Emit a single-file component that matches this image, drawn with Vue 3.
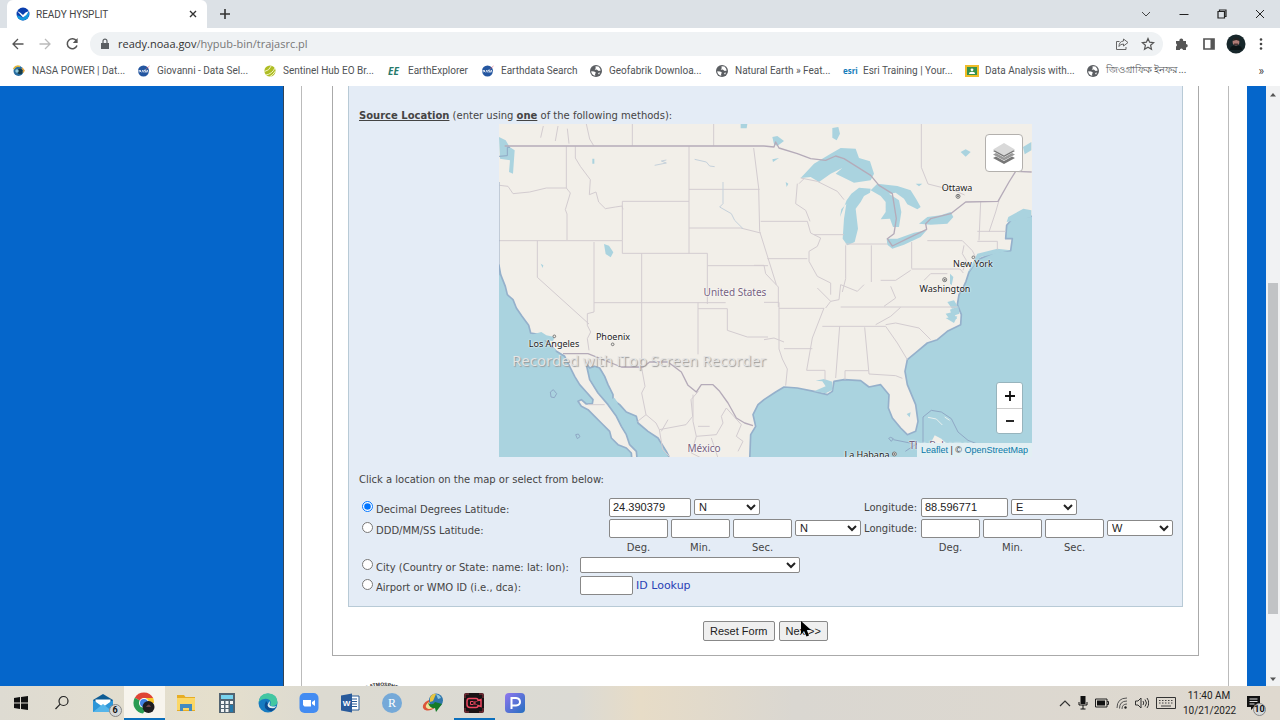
<script setup>
import { ref } from 'vue'

const bookmarks = [
  { text: 'NASA POWER | Dat...', icon: 'power', width: 125 },
  { text: 'Giovanni - Data Sel...', icon: 'nasa', width: 126 },
  { text: 'Sentinel Hub EO Br...', icon: 'sentinel', width: 125 },
  { text: 'EarthExplorer', icon: 'ee', width: 93 },
  { text: 'Earthdata Search', icon: 'nasa', width: 108 },
  { text: 'Geofabrik Downloa...', icon: 'globe', width: 126 },
  { text: 'Natural Earth » Feat...', icon: 'globe', width: 128 },
  { text: 'Esri Training | Your...', icon: 'esri', width: 122 },
  { text: 'Data Analysis with...', icon: 'class', width: 121 },
  { text: 'জিওগ্রাফিক ইনফর...', icon: 'globe', width: 110 },
]

const places = [
  { name: 'Ottawa', x: 458, y: 64 },
  { name: 'New York', x: 474, y: 140 },
  { name: 'Washington', x: 446, y: 165 },
  { name: 'Phoenix', x: 114, y: 213 },
  { name: 'Los Angeles', x: 55, y: 220 },
  { name: 'United States', x: 236, y: 168, country: true },
  { name: 'México', x: 205, y: 324, country: true },
  { name: 'La Habana', x: 368, y: 331 },
  { name: 'The Bahamas', x: 442, y: 321, country: true },
]

const parts = ['Deg.', 'Min.', 'Sec.']
const method = ref('decimal')
const latitude = ref('24.390379')
const longitude = ref('88.596771')
</script>

<template>
  <div class="screen">
    <header>
      <div class="tabs">
        <div class="tab">
          <svg width="14" height="14" viewBox="0 0 14 14"><circle cx="7" cy="7" r="6.5" fill="#0a3fae" /><path d="M.8 8.5Q4 8 7 11q2-3 6-6 1 7-6 8.500Q2 13 .8 8.500" fill="#1597dc" /><path d="M1 4q3 1 6 4 2-3 6-4-2 4-6 6.500Q4 7 1 4" fill="#fff" /></svg>
          <span>READY HYSPLIT</span>
          <button class="bare close" aria-label="Close tab"><svg width="8" height="8" viewBox="0 0 8 8"><path d="M1 1l6 6M7 1L1 7" stroke="#333" stroke-width="1.4" /></svg></button>
        </div>
        <button class="bare new-tab" aria-label="New tab"><svg width="12" height="12" viewBox="0 0 12 12"><path d="M6 1v10M1 6h10" stroke="#333" stroke-width="1.6" /></svg></button>
        <div class="window-buttons">
          <button class="bare" aria-label="Search tabs"><svg width="10" height="10" viewBox="0 0 10 10"><path d="M1 3l4 4 4-4" fill="none" stroke="#444" /></svg></button>
          <button class="bare" aria-label="Minimize"><svg width="10" height="10" viewBox="0 0 10 10"><path d="M.5 5.500h9" stroke="#222" /></svg></button>
          <button class="bare" aria-label="Restore"><svg width="10" height="10" viewBox="0 0 10 10"><path d="M1 2.500h6.500v6.500H1zM2.500 2.500v-1.500h6.500v6.500H7.500" fill="none" stroke="#222" stroke-width="1.200" /></svg></button>
          <button class="bare" aria-label="Close window"><svg width="10" height="10" viewBox="0 0 10 10"><path d="M1 1l8 8M9 1L1 9" stroke="#222" /></svg></button>
        </div>
      </div>

      <div class="toolbar">
        <button class="bare" aria-label="Back"><svg width="12" height="12" viewBox="0 0 12 12"><path d="M11.500 6H1.500M6 1L1 6l5 5" fill="none" stroke="#555" stroke-width="1.300" /></svg></button>
        <button class="bare" aria-label="Forward"><svg width="12" height="12" viewBox="0 0 12 12"><path d="M.5 6h10M6 1l5 5-5 5" fill="none" stroke="#bbb" stroke-width="1.300" /></svg></button>
        <button class="bare" aria-label="Reload"><svg width="14" height="14" viewBox="0 0 14 14"><path d="M11.500 4A5 5 0 1 0 12 8.500" fill="none" stroke="#555" stroke-width="1.500" /><path d="M12.600 1v5H7.800z" fill="#555" /></svg></button>
        <div class="address">
          <svg width="10" height="12" viewBox="0 0 10 12"><path d="M1 5h8v6H1z" fill="#5a5e62" /><path d="M3 5V3.200a2 2 0 0 1 4 0V5" fill="none" stroke="#5a5e62" stroke-width="1.200" /></svg>
          <span class="url">ready.noaa.gov<i>/hypub-bin/trajasrc.pl</i></span>
          <button class="bare" aria-label="Share"><svg width="14" height="14" viewBox="0 0 14 14"><path d="M4.500 4.500h-3v8h9.500V10" fill="none" stroke="#666" /><path d="M8.500 2l4.500 3.500L8.500 9V7Q5 7 4 9.500 4 4.500 8.500 4z" fill="none" stroke="#666" /></svg></button>
          <button class="bare" aria-label="Bookmark"><svg width="14" height="14" viewBox="0 0 14 14"><path d="M7 1.500l1.600 3.700 4 .4-3 2.700.9 4L7 10.200l-3.500 2.100.9-4-3-2.700 4-.4z" fill="none" stroke="#555" stroke-width="1.200" /></svg></button>
        </div>
        <button class="bare ext" aria-label="Extensions"><svg width="14" height="14" viewBox="0 0 14 14"><path d="M1 4h3.500a1.900 1.900 0 1 1 3.600 0H11v3a1.700 1.700 0 1 1 0 3.500V13H8a1.600 1.600 0 0 0-3.200 0H1V9.500a1.700 1.700 0 0 0 0-3z" fill="#555" /></svg></button>
        <button class="bare ext" aria-label="Side panel"><svg width="12" height="12" viewBox="0 0 12 12"><path d="M1 1h10v10H1z" fill="none" stroke="#555" stroke-width="1.700" /><path d="M7.500 1H11v10H7.500z" fill="#555" /></svg></button>
        <button class="bare ext" aria-label="Profile"><svg width="20" height="20" viewBox="0 0 20 20"><circle cx="10" cy="10" r="9.500" fill="#17272b" /><circle cx="10" cy="8" r="3.400" fill="#b07c76" /><path d="M6.500 7q1-4 4-3.500 3-.2 3.200 3.500l-3.500-1z" fill="#222" /><path d="M8 9.500h4v1.500H8z" fill="#4c3433" /><path d="M4 16q0-5 6-4 6-1 6 4" fill="#0c1416" /></svg></button>
        <button class="bare ext menu" aria-label="Menu"><svg width="4" height="12" viewBox="0 0 4 12"><g fill="#444"><circle cx="2" cy="1.500" r="1.300" /><circle cx="2" cy="6" r="1.300" /><circle cx="2" cy="10.500" r="1.300" /></g></svg></button>
      </div>

      <nav class="bookmarks">
        <a v-for="b in bookmarks" :key="b.text" href="#" :style="{ width: b.width + 'px' }">
          <b v-if="b.icon === 'ee'" class="ee">EE</b>
          <b v-else-if="b.icon === 'esri'" class="esri">esri</b>
          <svg v-else-if="b.icon === 'nasa'" width="14" height="14" viewBox="0 0 14 14"><circle cx="6.500" cy="7" r="5.500" fill="#2456a0" /><path d="M2 8.500V6l1.500 2V6M4.800 8.500l1-2.500 1 2.500M7.500 8H9V7H7.500V6h1.700M9.500 8.500l.8-2.500.8 2.500" fill="none" stroke="#fff" stroke-width=".7" /><path d="M9 5L12.500 2" fill="none" stroke="#d05468" stroke-width=".6" /></svg>
          <svg v-else-if="b.icon === 'power'" width="14" height="14" viewBox="0 0 14 14"><circle cx="6.500" cy="7" r="5" fill="#286da0" /><circle cx="8" cy="7.500" r="2.700" fill="#163b48" /><path d="M1.500 5Q4 1 8 2.500" fill="none" stroke="#e4b83c" stroke-width="1.500" /><path d="M10 4l2 2.500-1 2" fill="none" stroke="#e3a33d" stroke-width="1.500" /><circle cx="5" cy="7" r="1.700" fill="#8fc9db" /></svg>
          <svg v-else-if="b.icon === 'sentinel'" width="14" height="14" viewBox="0 0 14 14"><circle cx="7" cy="7" r="5.600" fill="#aebd24" /><path d="M1.500 7.500Q6 7 8.500 1.500M3 11q6-1 9-7M7 12.500Q10 11 12.500 7" fill="none" stroke="#f4f5c4" stroke-width="1" /></svg>
          <svg v-else-if="b.icon === 'globe'" width="14" height="14" viewBox="0 0 14 14"><circle cx="7" cy="7" r="6" fill="#5b5e62" /><path d="M2.200 7.200l3 .3 1.800 1.300-1 1.200.3 1.800Q2.500 11 2.200 7.200M6.500 2.200l3 .3L11 4.500l.7 2-2 .5-2-1.500-2 .2 1-1.500zM9 9l2-.5-1 2.200z" fill="#fff" /></svg>
          <svg v-else width="14" height="14" viewBox="0 0 14 14"><path d="M0 1h14v12H0z" fill="#efbc28" /><path d="M2 3h10v8H2z" fill="#37914c" /><circle cx="7" cy="5.800" r="1.400" fill="#fff" /><path d="M4 10q0-2.300 3-2.300T10 10z" fill="#fff" /></svg>
          <span>{{ b.text }}</span>
        </a>
        <button class="bare more" aria-label="More bookmarks">»</button>
      </nav>
    </header>

    <main>
      <div class="site">
        <div class="frame">
          <form class="box" @submit.prevent>
            <section class="panel">
              <p class="intro"><b>Source Location</b> (enter using <b>one</b> of the following methods):</p>

              <div class="map">
                <svg class="terrain" viewBox="3 6 1599 999" preserveAspectRatio="none">
                  <path d="M0 0h1610v1010H0z" fill="#f2efe9" />
                  <g fill="#aad3df" stroke="#95b0cb" stroke-width="5" stroke-linejoin="round">
                    <path transform="translate(0 498)" d="M-10-90L3-68 8-40 22-5 28 20 45 35 55 60 72 85 92 112 98 135 125 140 150 165 175 190 200 205 215 235 230 265 245 290 265 312 285 335 283 347 265 348 250 335 240 340 250 355 270 365 290 385 310 405 335 430 340 450 360 470 385 480 400 495 402 520H-10z" />
                    <path transform="translate(0 498)" d="M264 225L275 240 290 235 305 240 320 265 330 290 345 320 345 335 365 350 385 372 415 385 420 405 450 430 480 450 505 490 520 520H418L415 490 395 470 385 440 370 415 355 385 330 350 300 315 275 275z" />
                    <path transform="translate(798 498)" d="M-43 520L-40 440-25 415-33 380-18 350 0 335 35 312 60 297 100 300 150 310 190 320 205 310 210 280 240 275 290 278 315 297 350 290 375 320 373 360 385 390 410 420 430 440 455 430 462 400 455 350 430 290 423 250 430 215 460 190 490 165 520 155 550 130 590 110 592 80 580 50 585 20 597 0 606-20 615-48 640-85 700-110 740-112 745-148 725-148 728-188 745-208 775-213 812-216V520z" />
                  </g>
                  <g fill="#aad3df">
                    <path d="M3 45l20 10 12 20 15 10-5 70-12-5 3-35-30-5zM318 366l15 5 13 20-8 15-15-10zM283 110h6v15h-6zM128 425l8 5-2 8zM728 6l20 0-2 13h-18z" />
                    <path transform="translate(798 0)" d="M110 168L150 125 200 95 230 78 275 80 285 108 318 118 330 155 320 175 270 182 235 165 215 155 235 138 200 155 165 180 140 165zM262 215L285 197 320 200 318 212 300 222 290 240 275 260 282 320 272 360 250 370 236 350 240 290 247 245 232 262 228 285 248 235zM320 205L340 185 400 192 440 205 456 230 470 255 460 262 430 247 420 230 395 212 375 215 405 235 412 270 405 315 387 315 378 290 350 292 365 270 365 240 350 222zM368 350L400 350 450 332 488 325 470 345 420 368 385 380 370 368zM465 305L490 285 530 280 560 270 568 285 550 305 500 308zM205 18l18-3 5 20-10 20-13-8zM590 90l15-8 15 8-15 14zM777 75l25-15v25l-20 12zM25 45l15-3 20 15-20 15-10-5zM25 112l20-4-18 12zM65 180l8 5-5 10zM455 185l20 0-10 8zM640 395l60-15 40 5-90 20-40 50zM558 455l10 10-5 25-5-5zM550 540l20-5 12 20-18 5zM545 575l22-5 12 20-20 5zM728 300l5-15 45-25 24 5v20l-40 8z" />
                    <path transform="translate(0 498)" d="M100 140l30-8 15 10 25 5-5 12-40-3zM150 180l20 0 5 12zM325 300l10 5 2 20-8-5zM330 335l20-5 10 15-10 15z" />
                    <path transform="translate(798 498)" d="M150 310l35-15-10-15-20-2 25-5 25 8 0 25-20 10zM428 378l12-5-3 15zM558 65l25-10 3 22-22 8zM545 90l35-5-10 20z" />
                  </g>
                  <g fill="none" stroke="#d3ccd0" stroke-width="3" stroke-linejoin="round">
                    <path d="M5 190l25 3 15 22 50-5 50-12h60M205 73v125l12 15-15 50 5 13v78M0 356h373v38h255v37h182M373 238v118M373 238h200M573 73v321M573 202h212M573 318h155l40 10 20 5M118 356v110l155 140M288 360v210l-20 5v35l10 20-10 20 5 35M431 394v342h-60M288 542h395M628 431v115M600 542v155M600 560h88v65l60 20h62M403 6v65M647 6v65M265 6l10 45 12 20M232 73v35l15 25 30 40-3 45 20-8 8 30 20 20 30-5 20-3 3 10M767 78l15 120 3 130 25 80 25 80M136 12l-8 35M180 12l-8 45M208 20l5 45" />
                    <path transform="translate(798 0)" d="M-10 298h140M10 410h120M-30 430h30l5 25 38 40v60M130 298l10 35 30 15-10 25-25 15 0 30 25 45 40 20 0 35M150 338h90M245 370v100l-10 40M245 366h125M322 370v110M443 360v80M443 441h145l10 12M350 475l45 0 45-30M100 185l-5 60 30 20 13 33M110 168l50 10 60 30 20 25M472 6v130l20 50 80 20 30 13M490 356h105l30 30 10 20M640 358h60M645 355l5-115M705 235l-10 35-20 60M640 328h85M700 358v25M120 170l-15 15M600 370l-5 25 12 20-10 30M480 475l20-20 50 0" />
                    <path transform="translate(798 498)" d="M0 43h45v140l10 30 15 30-5 50M0 155l30-5 30 12M45 61h135M230 57h350M175 115h190M60 182h85M128 247h55v30M215 270l12-155M302 118l13 140 80 5 20 8M365 115l35 50 30 50M335 110l45-25 30-27M365 110l30-5 70 15 35 35M243 275v-27h70M180 60l-35 90-17 97M160 0l40 40-15 20M200 40l25-5 5-45 50 20 20-20M360 55l35-25-15-35" />
                    <path transform="translate(0 498)" d="M431 240l10 55-10 20 13 65-25 20M444 380l30 25 10 20 80-15 20-25-5-50 22-25M484 425l10 60 25 25M510 395l-20 35M585 320v80l10 45 60-5 20-35-5-20 15-25 45 50-15 35 20 15-15 30M595 445l-15 50 30 15M640 450l20 60M600 415h35M270 350h50" />
                  </g>
                  <g fill="none" stroke="#b5abb9" stroke-width="4" stroke-linejoin="round">
                    <path d="M20 72h778" />
                    <path transform="translate(798 0)" d="M0 72l30 3 5-15 10 18 55 17 40 15 45 5 30-13 25 8 80 50 25 30 40 25 12 75-7 45-20 15 15 22 45-22 58-28-3-17 15-15 60-15 45-35 97-2 33-58 20-32 48 2" />
                    <path transform="translate(0 498)" d="M195 197h75l100 40h65l20-15h55l40 30 20 40 25 20 15-22 35 0 20 20 25 35 25 45 25 15 25 8" />
                  </g>
                  <g fill="none" stroke="#8fa8c5" stroke-width="3">
                    <path d="M3 180v280M3 103l25-2v-25l8 0M166 803l10 12-7 12-10-2-2-15zM233 938l8-2 5 8-8 6zM1172 949l6-3 8 4-6 8zM1186 953l60 12M1222 988l30-20M1275 970l0-85 25-20 30 5 30 20 20 40 30 25 30 12" />
                    <path d="M1290 886l25 5 18 18M1340 885l15 10" stroke="#e9f1ef" />
                  </g>
                  <path d="M1310 940l20 10 30 30-70 0z" fill="#f2efe9" />
                  <g fill="#f2efe9" stroke="#777" stroke-width="3"><circle cx="1380" cy="223" r="6" /><circle cx="1340" cy="473" r="6" /><circle cx="1426" cy="406" r="4" /><circle cx="344" cy="667" r="4" /><circle cx="169" cy="643" r="4" /><circle cx="1189" cy="996" r="6" /></g>
                  <g fill="#777"><circle cx="1380" cy="223" r="3" /><circle cx="1340" cy="473" r="3" /><circle cx="1189" cy="996" r="3" /></g>
                  <path d="M470 130l35-7-15-6 15-3M590 112l35 8 10 12 15 2M675 180v65l-10 10 35 20 10 20 25 25" fill="none" stroke="#c5d1db" stroke-width="3" />
                </svg>
                <span v-for="p in places" :key="p.name" class="place" :class="{ country: p.country }" :style="{ left: p.x + 'px', top: p.y + 'px' }">{{ p.name }}</span>
                <span class="watermark">Recorded with iTop Screen Recorder</span>
                <button type="button" class="layers" aria-label="Layers"><svg width="26" height="26" viewBox="0 0 26 26"><path d="M2 18l11 6 11-6-3-1.500-8 4.500-8-4.500z" fill="#777" /><path d="M2 14.500l11 6 11-6-3-1.500-8 4.500L5 13z" fill="#999" /><path d="M2 11l11 6 11-6-3-1.500-8 4.500-8-4.500z" fill="#777" /><path d="M2 9.500L13 3l11 6.500-11 6z" fill="#d9d9d9" /></svg></button>
                <div class="zoom"><button type="button" aria-label="Zoom in"><svg width="12" height="12" viewBox="0 0 12 12"><path d="M6 1v10M1 6h10" stroke="#111" stroke-width="1.800" /></svg></button><button type="button" aria-label="Zoom out"><svg width="12" height="12" viewBox="0 0 12 12"><path d="M2 6h8" stroke="#111" stroke-width="1.800" /></svg></button></div>
                <div class="credit"><a href="#">Leaflet</a> | © <a href="#">OpenStreetMap</a></div>
              </div>

              <p class="hint">Click a location on the map or select from below:</p>

              <div class="row">
                <label class="method"><input v-model="method" type="radio" name="method" value="decimal"><span>Decimal Degrees Latitude:</span></label>
                <div class="fields">
                  <input v-model="latitude" class="degrees" aria-label="Latitude">
                  <select aria-label="Latitude direction"><option>N</option><option>S</option></select>
                </div>
                <label class="lon" for="lon">Longitude:</label>
                <div class="fields">
                  <input id="lon" v-model="longitude" class="degrees wide">
                  <select aria-label="Longitude direction"><option>E</option><option>W</option></select>
                </div>
              </div>

              <div class="row">
                <label class="method"><input v-model="method" type="radio" name="method" value="dms"><span>DDD/MM/SS Latitude:</span></label>
                <div class="fields">
                  <input v-for="p in parts" :key="p" class="part" :aria-label="'Latitude ' + p">
                  <select aria-label="Latitude hemisphere"><option>N</option><option>S</option></select>
                </div>
                <label class="lon" for="lon-Deg.">Longitude:</label>
                <div class="fields">
                  <input v-for="p in parts" :id="'lon-' + p" :key="p" class="part" :aria-label="'Longitude ' + p">
                  <select aria-label="Longitude hemisphere"><option>W</option><option>E</option></select>
                </div>
              </div>

              <div class="row units">
                <span class="method"></span>
                <div class="fields"><span v-for="p in parts" :key="p">{{ p }}</span></div>
                <span class="lon"></span>
                <div class="fields"><span v-for="p in parts" :key="p">{{ p }}</span></div>
              </div>

              <div class="row">
                <label class="method short"><input v-model="method" type="radio" name="method" value="city"><span>City (Country or State: name: lat: lon):</span></label>
                <select class="city" aria-label="City"><option></option></select>
              </div>
              <div class="row">
                <label class="method short"><input v-model="method" type="radio" name="method" value="airport"><span>Airport or WMO ID (i.e., dca):</span></label>
                <input class="station" aria-label="Airport or WMO ID">
                <a class="lookup" href="#">ID Lookup</a>
              </div>
            </section>

            <div class="actions">
              <button type="reset">Reset Form</button>
              <button type="submit">Next&gt;&gt;<svg class="cursor" width="12" height="18" viewBox="0 0 12 18"><path d="M1 1v13l3-3 2.500 5.500 2.500-1L6.700 10H11z" fill="#000" /></svg></button>
            </div>
          </form>
          <svg class="seal" width="88" height="88" viewBox="0 0 88 88"><defs><path id="arc" d="M6 44a38 38 0 0 1 76 0" /></defs><circle cx="44" cy="44" r="38" fill="#33415f" /><text><textPath href="#arc" startOffset="50%">AND ATMOSPHERIC</textPath></text></svg>
        </div>
      </div>
      <div class="scrollbar">
        <svg width="8" height="5" viewBox="0 0 8 5"><path d="M1 4.500L4 1l3 3.500z" fill="#555" /></svg>
        <div class="track"><div class="thumb"></div></div>
        <svg width="8" height="5" viewBox="0 0 8 5"><path d="M1 .5L4 4 7 .5z" fill="#555" /></svg>
      </div>
    </main>

    <footer>
      <div class="apps">
        <button class="bare" aria-label="Start"><svg width="14" height="14" viewBox="0 0 14 14"><path d="M0 2l6-.9v5.400H0zM7 1l7-1v6.500H7zM0 7.500h6v5.400L0 12zM7 7.500h7V14l-7-1z" fill="#111" /></svg></button>
        <button class="bare" aria-label="Search"><svg width="16" height="16" viewBox="0 0 16 16"><circle cx="9.500" cy="6" r="4.500" fill="none" stroke="#222" stroke-width="1.200" /><path d="M6.200 9.200L1.500 14" stroke="#222" stroke-width="1.200" /></svg></button>
        <button class="bare mail" aria-label="Mail"><svg width="22" height="20" viewBox="0 0 22 20"><path d="M1 7l10-6 10 6v12H1z" fill="#0f5c94" /><path d="M3.500 6.500h15V13h-15z" fill="#fff" /><path d="M1 7l10 7 10-7v12H1z" fill="#2d96d8" /><path d="M1 19l10-8 10 8z" fill="#55b5ea" /></svg><span class="count">6</span></button>
        <button class="bare active lit" aria-label="Chrome"><svg width="22" height="22" viewBox="0 0 22 22"><path d="M11 11L1.800 5.800A10.500 10.500 0 0 1 20.200 6z" fill="#df4435" /><path d="M11 11h10A10.500 10.500 0 0 0 20.200 6H10z" fill="#f8c72c" /><path d="M11 11L1.800 5.800A10.500 10.500 0 0 0 10 21.400l4-6z" fill="#299c52" /><circle cx="11" cy="11" r="5" fill="#fff" /><circle cx="11" cy="11" r="4" fill="#4083e5" /><circle cx="15.500" cy="15" r="6" fill="#1d1d20" /><path d="M13 15q3-5 5 0z" fill="#6c4549" /></svg></button>
        <button class="bare" aria-label="Files"><svg width="20" height="18" viewBox="0 0 20 18"><path d="M1 1h7l1.500 2H19v14H1z" fill="#e7ad24" /><path d="M1 4h18v12H1z" fill="#fbd766" /><path d="M4 10h12v7h-3v-3H7v3H4z" fill="#438bc0" /></svg></button>
        <button class="bare" aria-label="Calculator"><svg width="16" height="20" viewBox="0 0 16 20"><path d="M0 0h16v20H0z" fill="#536471" /><path d="M2 2h12v4H2z" fill="#78d4ef" /><path d="M2 8h3v3H2zM6.500 8h3v3h-3zM11 8h3v3h-3zM2 12h3v3H2zM6.500 12h3v3h-3zM2 16h3v3H2zM6.500 16h3v3h-3z" fill="#f3f5f5" /><path d="M11 12h3v7h-3z" fill="#2379ac" /></svg></button>
        <button class="bare" aria-label="Edge"><svg width="20" height="20" viewBox="0 0 20 20"><circle cx="10" cy="10" r="9.500" fill="#167bc1" /><path d="M.6 9Q2 0 10 .5q9 0 9.500 8.500-.5 4-5 4-3 0-2-2 1-4-3-5-5-1-8.900 3" fill="#43c7a1" /><path d="M8 8q-4 8 4 10 3 1 6-4-8 3-8-3-1-2-2-3" fill="#0c4c91" /><path d="M11.500 8q1 3-.2 3.500.7 3 7.200 1.500l-2 2q-6 1-7-3z" fill="#e1eeee" /></svg></button>
        <button class="bare" aria-label="Zoom"><svg width="20" height="20" viewBox="0 0 20 20"><rect x=".5" width="19" height="20" rx="5" fill="#438cf2" /><path d="M4 7h8v6.500H5.500L4 12zM13 9l3-2v6l-3-2z" fill="#fff" /></svg></button>
        <button class="bare word" aria-label="Word"><svg width="20" height="20" viewBox="0 0 20 20"><path d="M10 3h9v14h-9z" fill="#fff" stroke="#285a96" /><path d="M11 6h6M11 8.500h6M11 11h6M11 13.500h6" stroke="#285a96" /><path d="M1 2.500L12 .5v19L1 17.500z" fill="#285a9b" /><text x="6.500" y="13">W</text></svg></button>
        <button class="bare rlang" aria-label="RStudio"><svg width="20" height="20" viewBox="0 0 20 20"><circle cx="10" cy="10" r="10" fill="#75a9d8" /><text x="10" y="14">R</text></svg></button>
        <button class="bare" aria-label="Download manager"><svg width="22" height="20" viewBox="0 0 22 20"><ellipse cx="8" cy="12" rx="7.500" ry="5" fill="#dc563b" transform="rotate(-25 8 12)" /><ellipse cx="9" cy="12" rx="5.500" ry="3.500" fill="#eee49a" transform="rotate(-25 9 12)" /><circle cx="14" cy="7.500" r="7" fill="#3177ac" /><path d="M8 5q2-5 6-4l-3 7-3 1z" fill="#e7c540" /><path d="M14 1q4 1 5 4l-3 1z" fill="#8ec7df" /><path d="M6 10q5 3 7-1l7 2-6 8-1-4q-5 1-7-5" fill="#167b27" /></svg></button>
        <button class="bare active" aria-label="Screen recorder"><svg width="20" height="20" viewBox="0 0 20 20"><rect width="20" height="20" rx="2" fill="#191214" /><path d="M1 5V1h4M15 1h4v4M19 15v4h-4M5 19H1v-4" fill="none" stroke="#983441" /><path d="M5 5.500h7q2 0 2 2l3-1v7l-3-1q0 2-2 2H6q-3 0-3-3V8.500q0-3 2-3z" fill="none" stroke="#ef4861" stroke-width="1.500" /><path d="M9 8.500H6.500v3H9M10 8v4M12.500 8L10.500 10l2 2" fill="none" stroke="#ef4861" /></svg></button>
        <button class="bare" aria-label="PicPick"><svg width="20" height="20" viewBox="0 0 20 20"><defs><linearGradient id="pg" x2="1" y2="1"><stop stop-color="#9076ee" /><stop offset="1" stop-color="#246fc0" /></linearGradient></defs><rect width="20" height="20" rx="4" fill="url(#pg)" /><path d="M6.500 16V5H11q4 .5 4 4 0 3-4 3.500H7" fill="none" stroke="#fff" stroke-width="2" /></svg></button>
      </div>
      <div class="tray">
        <svg width="12" height="8" viewBox="0 0 12 8"><path d="M1 7l5-5 5 5" fill="none" stroke="#333" stroke-width="1.200" /></svg>
        <svg width="10" height="14" viewBox="0 0 10 14"><path d="M2.500 0h5v8h-5z" fill="#111" /><path d="M1 6v3h8V6M5 9v4M2.500 13h5" fill="none" stroke="#111" /></svg>
        <svg width="14" height="10" viewBox="0 0 14 10"><path d="M.5 1h11.500v8H.5zM12 3.500h1.500v3H12" fill="none" stroke="#222" /><path d="M2 2.500h8v5H2z" fill="#111" /></svg>
        <svg width="12" height="12" viewBox="0 0 12 12"><path d="M1 11Q1 1 11 1M3.500 11.500Q3.500 4 11 4M6 12Q6 7 11 7" fill="none" stroke="#555" /><circle cx="9.500" cy="10.500" r="1.200" fill="#222" /></svg>
        <svg width="14" height="12" viewBox="0 0 14 12"><path d="M.5 4h2.500l3-3v10L3 8H.5zM8 4q1.500 2 0 4M10 2.500q3 3.500 0 7M12 1q3.500 5 0 10" fill="none" stroke="#333" /></svg>
        <svg width="20" height="12" viewBox="0 0 20 12"><path d="M.5.5h19v11H.5z" fill="none" stroke="#333" /><path d="M3 3.500h14M3 6h14" stroke="#444" stroke-dasharray="1.500 1.500" /><path d="M5 9h10" stroke="#444" /></svg>
        <time>11:40 AM<br>10/21/2022</time>
        <button class="bare notice" aria-label="Notifications"><svg width="14" height="14" viewBox="0 0 14 14"><path d="M0 0h13v11H7l-3 3v-3H0z" fill="#111" /><path d="M2.500 3h8M2.500 5.500h8M2.500 8h5" stroke="#ddd" /></svg><span class="count">10</span></button>
      </div>
    </footer>
  </div>
</template>

<style>
html, body { margin: 0; }
</style>

<style scoped>
* { box-sizing: border-box; }
.screen { display: flex; flex-direction: column; height: 100vh; overflow: hidden; font-family: "Open Sans", "Noto Sans", sans-serif; color: #444; }
svg { display: block; flex: none; }
.bare { display: flex; align-items: center; justify-content: center; border: 0; padding: 0; background: none; font: inherit; color: inherit; }
a { text-decoration: none; }
header { flex: none; background: #fff; }
.tabs { display: flex; align-items: center; height: 28px; padding-right: 1px; background: #dce1e6; }
.tab { display: flex; align-items: center; width: 200px; height: 28px; margin-left: 7px; padding: 0 8px 0 9px; background: #fff; border-radius: 6px 6px 0 0; font-family: Roboto, sans-serif; font-size: 10px; }
.tab span { flex: 1; margin-left: 6px; }
.close { width: 12px; }
.new-tab { width: 36px; }
.window-buttons { display: flex; margin-left: auto; }
.window-buttons .bare { width: 38px; height: 26px; }
.toolbar { display: flex; align-items: center; height: 31px; padding: 0 7px 0 4px; }
.toolbar > .bare { width: 27px; }
.address { flex: 1; display: flex; align-items: center; height: 24px; margin: 0 5px; padding: 0 6px 0 10px; border-radius: 12px; background: #eff2f4; gap: 8px; }
.url { flex: 1; font-size: 11px; color: #333; }
.url i { font-style: normal; color: #777; }
.address .bare { width: 18px; }
.toolbar .menu { width: 24px; }
.bookmarks { display: flex; align-items: center; height: 27px; padding: 0 16px 4px 12px; font-family: Roboto, sans-serif; font-size: 10px; }
.bookmarks a { display: flex; flex: none; align-items: center; gap: 6px; color: #505356; white-space: nowrap; }
.ee { width: 14px; font: italic bold 10px "Open Sans", sans-serif; color: #27796a; }
.esri { width: 14px; font: bold 8px "Open Sans", sans-serif; color: #157dbb; }
.more { margin-left: auto; font-size: 12px; }
main { flex: 1; min-height: 0; display: grid; grid-template-columns: 283fr 964fr 19fr 14px; background: #0566cb; overflow: hidden; }
.site { grid-column: 2; padding: 0 18px 0 17px; background: #fff; border-left: 1px solid #345; overflow: hidden; }
.frame { height: 100%; padding: 0 29px 0 30px; border: solid #bbb; border-width: 0 1px; }
.box { padding: 0 15px 14px; border: solid #aaa; border-width: 0 1px 1px; }
.panel { padding: 22px 10px 11px; background: #e4ecf6; border: solid #b8cad6; border-width: 0 1px 1px; font-family: "DejaVu Sans", sans-serif; font-size: 10px; }
p { margin: 0; line-height: 16px; }
.intro b { text-decoration: underline; }
.map { position: relative; width: 533px; height: 333px; margin: 0 auto 15px; overflow: hidden; }
.terrain { width: 100%; height: 100%; }
.place, .watermark { position: absolute; transform: translate(-50%, -50%); white-space: nowrap; font-family: "Noto Sans", sans-serif; font-size: 9px; line-height: 14px; color: #222; text-shadow: 0 0 2px #fff, 0 0 2px #fff; }
.country { font-size: 10px; color: #76617f; }
.watermark { left: 140px; top: 236px; font-family: "Open Sans", sans-serif; font-size: 15px; color: #e4e4e4; text-shadow: 1px 1px 1px #999; }
.layers { position: absolute; right: 9px; top: 10px; width: 38px; height: 38px; display: grid; place-items: center; padding: 0; border: 1px solid #b3b0ad; border-radius: 4px; background: #fff; }
.zoom { position: absolute; right: 9px; bottom: 23px; width: 27px; border: 1px solid #97b4bd; border-radius: 3px; background: #fff; }
.zoom button { display: grid; place-items: center; width: 25px; height: 25px; padding: 0; border: 0; background: none; }
.zoom button + button { border-top: 1px solid #ccc; }
.credit { position: absolute; right: 0; bottom: 0; padding: 0 4px; background: #e2eff3; font: 9px/14px "Liberation Sans", sans-serif; color: #333; }
.credit a { color: #0878a8; }
.hint { margin-bottom: 9px; }
.row { display: flex; align-items: center; height: 20px; margin-bottom: 1px; }
.row.units { height: 16px; margin-bottom: 0; }
.row.units ~ .row { margin-bottom: 0; }
.method { display: flex; flex: none; align-items: center; width: 250px; }
.method.short { width: 221px; }
.method input { width: 11px; height: 11px; margin: 0 3px 2px; }
.method span { padding-top: 4px; white-space: nowrap; }
.fields { display: flex; flex: none; align-items: center; gap: 3px; }
.method + .fields { width: 255px; }
.lon { flex: none; width: 57px; }
.row > .fields input, .station { height: 19px; padding: 0 3px; border: 1px solid #888; border-radius: 2px; background: #fff; font: 11px "Liberation Sans", sans-serif; color: #222; }
.row > .fields .degrees { width: 82px; }
.row > .fields .wide { width: 87px; }
.part { width: 59px; }
select { width: 66px; height: 16px; padding: 0; border: 1px solid #888; border-radius: 2px; background: #fff; font: 11px "Liberation Sans", sans-serif; color: #222; }
.units .fields span { width: 59px; text-align: center; }
.city { width: 220px; }
.station { width: 53px; }
.lookup { margin-left: 3px; font-size: 11px; color: #2941b5; }
.actions { display: flex; justify-content: center; gap: 4px; padding: 14px 0 0; }
.actions button { position: relative; height: 20px; padding: 0 6px; border: 1px solid #888; border-radius: 2px; background: #efefef; font: 11px "Liberation Sans", sans-serif; color: #222; }
.cursor { position: absolute; left: 20px; top: -2px; }
.seal { margin: 24px 0 0 6px; }
.seal text { font: bold 5px "Liberation Sans", sans-serif; fill: #222; text-anchor: middle; }
.scrollbar { grid-column: 4; display: flex; flex-direction: column; align-items: center; padding: 6px 0 4px; background: #f1f2f3; }
.track { flex: 1; width: 10px; margin: 5px 0; }
.thumb { height: 58%; margin-top: 181px; background: #c1c3c5; }
footer { flex: none; display: flex; justify-content: space-between; height: 34px; background: linear-gradient(90deg, #dedbd2, #e5dfcc 17%, #dcdad1 25%, #dbdad4 45%, #e7dcc7 50%, #dad7d1 62%, #dfd9cf); }
.apps { display: flex; width: 536px; }
.apps .bare { position: relative; flex: 1; padding-top: 2px; border-bottom: 2px solid transparent; }
.apps .active { border-color: #0b6fbd; }
.apps .lit { background: #f7f4ed; }
.word text, .rlang text { fill: #fff; text-anchor: middle; font: bold 8px "Liberation Sans", sans-serif; }
.rlang text { font: 12px "Liberation Serif", serif; }
.count { position: absolute; right: 2px; bottom: 1px; width: 13px; height: 13px; border: 1px solid #888; border-radius: 50%; background: #d5d8d9; font: bold 9px/11px Roboto, sans-serif; text-align: center; color: #111; }
.tray { display: flex; align-items: center; gap: 7px; padding-right: 14px; }
.tray time { width: 52px; font-family: Roboto, sans-serif; font-size: 10px; line-height: 15px; text-align: center; color: #222; white-space: nowrap; }
.notice { position: relative; width: 24px; height: 34px; }
.notice .count { right: 0; bottom: 4px; }
</style>
